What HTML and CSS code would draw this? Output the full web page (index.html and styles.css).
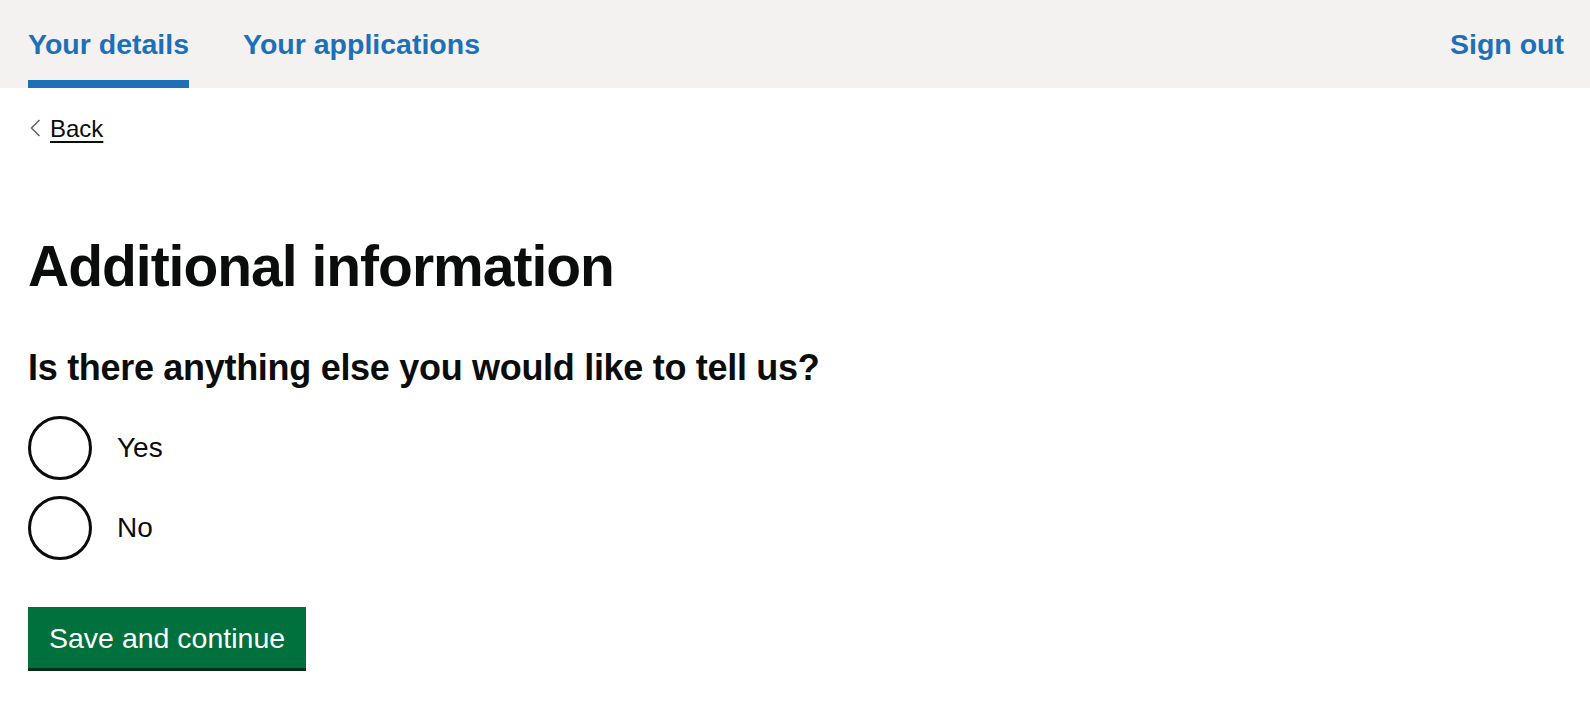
FILE: index.html
```html
<!DOCTYPE html>
<html lang="en">
<head>
<meta charset="utf-8">
<title>Additional information</title>
<link rel="stylesheet" href="styles.css">
</head>
<body>
<header class="service-nav">
  <nav class="nav-list">
    <a class="nav-link nav-link--active" href="#">Your details</a>
    <a class="nav-link" href="#">Your applications</a>
  </nav>
  <a class="nav-link" href="#">Sign out</a>
</header>
<main class="page">
  <a class="back-link" href="#"><svg class="back-chevron" width="11" height="18" viewBox="0 0 11 18" aria-hidden="true"><polyline points="9.5,1 1.5,9 9.5,17" fill="none" stroke="#505a5f" stroke-width="1.4"/></svg><span class="back-text">Back</span></a>
  <h1 class="heading">Additional information</h1>
  <form class="form">
    <fieldset class="fieldset">
      <legend class="legend">Is there anything else you would like to tell us?</legend>
      <div class="radios">
        <label class="radio"><input class="radio-input" type="radio" name="more"><span class="radio-label">Yes</span></label>
        <label class="radio"><input class="radio-input" type="radio" name="more"><span class="radio-label">No</span></label>
      </div>
    </fieldset>
    <button class="button" type="button">Save and continue</button>
  </form>
</main>
</body>
</html>
```
FILE: styles.css
```css
* { box-sizing: border-box; }
html, body { margin: 0; padding: 0; background: #ffffff; }
body {
  font-family: "Liberation Sans", Arial, sans-serif;
  color: #0b0c0c;
}
.service-nav {
  display: flex;
  justify-content: space-between;
  align-items: flex-start;
  height: 88px;
  background: #f3f2f1;
  padding: 0 26px 0 28px;
}
.nav-list {
  display: flex;
  gap: 54px;
}
.nav-link {
  display: block;
  font-size: 28.5px;
  line-height: 32px;
  font-weight: 700;
  color: #1d70b8;
  text-decoration: none;
  padding-top: 28px;
  padding-bottom: 20px;
  border-bottom: 8px solid transparent;
}
.nav-link--active { border-bottom-color: #1d70b8; }
.page { padding: 26px 28px 40px; }
.back-link {
  display: inline-flex;
  align-items: center;
  gap: 9px;
  font-size: 24px;
  line-height: 30px;
  color: #0b0c0c;
  text-decoration: none;
  padding-left: 2px;
}
.back-chevron { display: block; margin-top: -2px; }
.back-text {
  text-decoration: underline;
  text-decoration-thickness: 2px;
  text-underline-offset: 4px;
}
.heading {
  margin: 90px 0 0;
  font-size: 57px;
  line-height: 64px;
  font-weight: 700;
  letter-spacing: -1px;
}
.form { margin: 50px 0 0; }
.fieldset { margin: 0; padding: 0; border: 0; min-width: 0; }
.legend {
  padding: 0;
  font-size: 36px;
  line-height: 40px;
  font-weight: 700;
  letter-spacing: -0.3px;
}
.radios {
  display: flex;
  flex-direction: column;
  gap: 16px;
  margin-top: 28px;
}
.radio {
  display: flex;
  align-items: center;
  gap: 25px;
}
.radio-input {
  appearance: none;
  -webkit-appearance: none;
  margin: 0;
  width: 64px;
  height: 64px;
  border: 3px solid #0b0c0c;
  border-radius: 50%;
  background: #ffffff;
  flex: none;
}
.radio-label {
  font-size: 28px;
  line-height: 32px;
}
.button {
  display: block;
  margin-top: 47px;
  padding: 14.5px 21px;
  font-family: "Liberation Sans", Arial, sans-serif;
  font-size: 28.5px;
  line-height: 32px;
  color: #ffffff;
  background: #00703c;
  border: 0;
  border-radius: 0;
  box-shadow: 0 3px 0 #002d18;
}
```
